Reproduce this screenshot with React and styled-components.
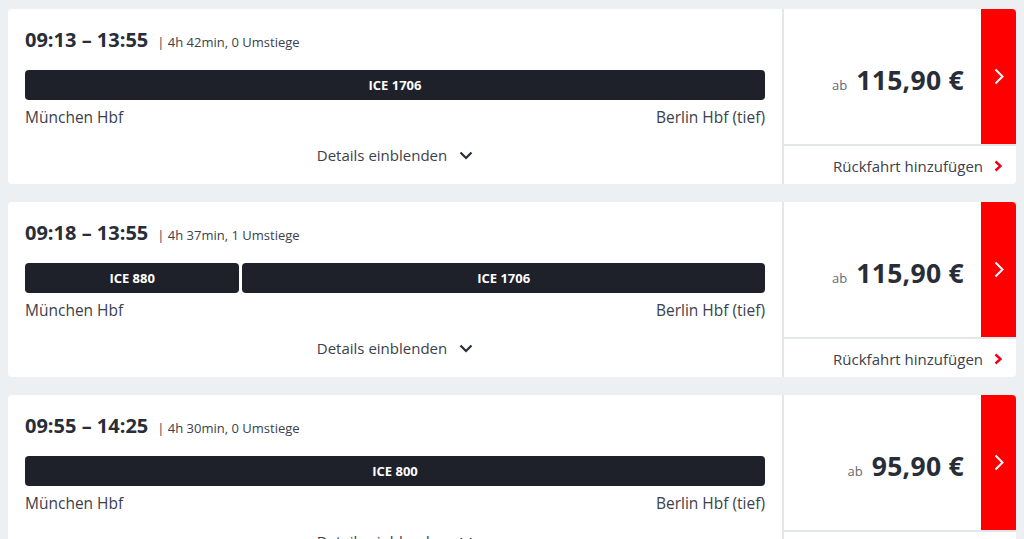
import React from "react";
import styled, { createGlobalStyle } from "styled-components";

const GlobalStyle = createGlobalStyle`
	body {
		margin: 0;
		background: #ecf0f3;
		font-family: "Open Sans", "Noto Sans", sans-serif;
		color: #282d37;
	}
`;

const Page = styled.div`
	display: flex;
	flex-direction: column;
	gap: 18px;
	padding: 9px 8px 0;
	height: 539px;
	overflow: hidden;
	box-sizing: border-box;
`;

const Card = styled.div`
	display: grid;
	grid-template-columns: 1fr 232px;
	height: 175px;
	flex-shrink: 0;
	background: #fff;
	border-radius: 4px;
`;

const Journey = styled.div`
	display: flex;
	flex-direction: column;
	padding: 19px 17px 0;
	border-right: 2px solid #e3e7ea;
`;

const Header = styled.div`
	display: flex;
	align-items: baseline;
	gap: 9px;
	line-height: 24px;
`;

const Times = styled.span`
	font-size: 20px;
	font-weight: 700;
	color: #282d37;
`;

const Meta = styled.span`
	font-size: 13px;
	color: #3c414b;
`;

const Bar = styled.div`
	display: flex;
	gap: 3px;
	margin-top: 16px;
	height: 30px;
`;

const Segment = styled.div`
	flex: ${(props) => props.grow};
	display: flex;
	align-items: center;
	justify-content: center;
	background: #1e2129;
	border-radius: 4px;
	color: #fff;
	font-size: 13px;
	font-weight: 700;
`;

const Stations = styled.div`
	display: flex;
	justify-content: space-between;
	margin-top: 7px;
	line-height: 20px;
	font-size: 15.5px;
	color: #3c414b;
`;

const Details = styled.button`
	align-self: center;
	display: flex;
	align-items: center;
	gap: 12px;
	margin-top: 18px;
	padding: 0;
	border: 0;
	background: none;
	font-family: inherit;
	font-size: 15px;
	line-height: 20px;
	color: #3c414b;
`;

const Offer = styled.div`
	display: grid;
	grid-template-rows: 1fr 38px;
`;

const PriceRow = styled.div`
	display: flex;
	border-bottom: 2px solid #e3e7ea;
`;

const Price = styled.div`
	flex: 1;
	display: flex;
	align-items: baseline;
	justify-content: flex-end;
	gap: 9px;
	padding: 7px 17px 0 0;
	align-self: center;
`;

const From = styled.span`
	font-size: 13px;
	color: #646973;
`;

const Amount = styled.span`
	font-size: 26.5px;
	font-weight: 700;
	color: #282d37;
	letter-spacing: 0.3px;
`;

const BookButton = styled.div`
	width: 35px;
	display: flex;
	align-items: center;
	justify-content: center;
	background: #ff0000;
	border-top-right-radius: 4px;
`;

const ReturnRow = styled.div`
	display: flex;
	align-items: center;
	justify-content: flex-end;
	gap: 11px;
	padding: 1px 14px 0 0;
	font-size: 15px;
	color: #3c414b;
`;

function ChevronDown() {
	return (
		<svg width="14" height="9" viewBox="0 0 14 9">
			<path d="M1.5 1.5 L7 7 L12.5 1.5" fill="none" stroke="#282d37" strokeWidth="2.2" />
		</svg>
	);
}

function ChevronRight({ color, w, h, stroke }) {
	return (
		<svg width={w} height={h} viewBox={`0 0 ${w} ${h}`}>
			<path
				d={`M1.5 1.5 L${w - 1.5} ${h / 2} L1.5 ${h - 1.5}`}
				fill="none"
				stroke={color}
				strokeWidth={stroke}
			/>
		</svg>
	);
}

const journeys = [
	{
		times: "09:13 – 13:55",
		meta: "4h 42min, 0 Umstiege",
		trains: [{ name: "ICE 1706", grow: 1 }],
		price: "115,90 €",
	},
	{
		times: "09:18 – 13:55",
		meta: "4h 37min, 1 Umstiege",
		trains: [
			{ name: "ICE 880", grow: 214 },
			{ name: "ICE 1706", grow: 522 },
		],
		price: "115,90 €",
	},
	{
		times: "09:55 – 14:25",
		meta: "4h 30min, 0 Umstiege",
		trains: [{ name: "ICE 800", grow: 1 }],
		price: "95,90 €",
	},
];

function JourneyCard({ journey }) {
	return (
		<Card>
			<Journey>
				<Header>
					<Times>{journey.times}</Times>
					<Meta>| {journey.meta}</Meta>
				</Header>
				<Bar>
					{journey.trains.map((t) => (
						<Segment key={t.name} grow={t.grow}>
							{t.name}
						</Segment>
					))}
				</Bar>
				<Stations>
					<span>München Hbf</span>
					<span>Berlin Hbf (tief)</span>
				</Stations>
				<Details>
					Details einblenden
					<ChevronDown />
				</Details>
			</Journey>
			<Offer>
				<PriceRow>
					<Price>
						<From>ab</From>
						<Amount>{journey.price}</Amount>
					</Price>
					<BookButton>
						<ChevronRight color="#fff" w={10} h={17} stroke={2} />
					</BookButton>
				</PriceRow>
				<ReturnRow>
					Rückfahrt hinzufügen
					<ChevronRight color="#ec0016" w={8} h={12} stroke={2.4} />
				</ReturnRow>
			</Offer>
		</Card>
	);
}

export default function App() {
	return (
		<>
			<GlobalStyle />
			<Page>
				{journeys.map((j) => (
					<JourneyCard key={j.times} journey={j} />
				))}
			</Page>
		</>
	);
}
